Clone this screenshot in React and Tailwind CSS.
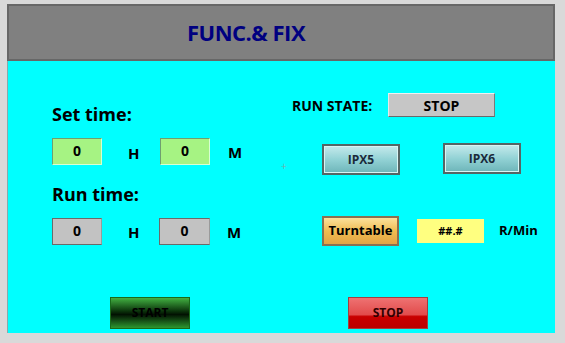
export default function App() {
  const font = { fontFamily: '"Open Sans", "Liberation Sans", sans-serif' };

  return (
    <div className="w-[565px] h-[343px] bg-[#d9d9d9] overflow-hidden pt-[4px] pl-[7px]" style={font}>
      <div className="w-[548px]">
        <div className="h-[57px] bg-[#808080] border-2 border-[#676767] flex items-center justify-center pr-[70px]">
          <h1 className="text-[22px] font-bold text-[#000080] tracking-[-0.5px]">FUNC.&amp; FIX</h1>
        </div>

        <div className="relative h-[272px] bg-[#00ffff] border-l border-[#8aa] flex flex-col">
          <div className="flex flex-1">
            {/* left column */}
            <div className="w-[275px] pl-[44px] pt-[43px] text-black">
              <div className="h-[20px] leading-[20px] text-[18px] font-bold">Set time:</div>
              <div className="flex items-center mt-[14px] h-[27px]">
                <div className="w-[50px] h-[27px] bg-[#a6f383] border border-t-[#6f9f6f] border-l-[#6f9f6f] border-r-[#d8ffd0] border-b-[#d8ffd0] flex items-center justify-center text-[14px] font-bold pb-[2px]">0</div>
                <span className="w-[58px] pl-[26px] pt-[4px] text-[15px] font-bold">H</span>
                <div className="w-[50px] h-[27px] bg-[#a6f383] border border-t-[#6f9f6f] border-l-[#6f9f6f] border-r-[#d8ffd0] border-b-[#d8ffd0] flex items-center justify-center text-[14px] font-bold pb-[2px]">0</div>
                <span className="pl-[18px] pt-[2px] text-[15px] font-bold">M</span>
              </div>
              <div className="h-[20px] leading-[20px] text-[18px] font-bold mt-[19px]">Run time:</div>
              <div className="flex items-center mt-[14px] h-[27px]">
                <div className="w-[50px] h-[27px] bg-[#c2c2c2] border border-[#6a6a6a] border-r-[#9a9a9a] flex items-center justify-center text-[14px] font-bold pb-[2px]">0</div>
                <span className="w-[57px] pl-[26px] pt-[2px] text-[15px] font-bold">H</span>
                <div className="w-[51px] h-[27px] bg-[#c2c2c2] border border-[#6a6a6a] border-r-[#9a9a9a] flex items-center justify-center text-[14px] font-bold pb-[2px]">0</div>
                <span className="pl-[17px] pt-[2px] text-[15px] font-bold">M</span>
              </div>
            </div>

            {/* right column */}
            <div className="flex-1 pt-[32px] text-black">
              <div className="flex items-center pl-[9px] h-[24px]">
                <span className="text-[14px] font-bold w-[96px]">RUN STATE:</span>
                <div className="w-[107px] h-[24px] bg-[#c6c6c6] border border-t-[#f0f0f0] border-l-[#e8e8e8] border-r-[#7a7a7a] border-b-[#6a6a6a] flex items-center justify-center text-[14px] font-bold">STOP</div>
              </div>

              <div className="flex items-center pl-[39px] mt-[27px]">
                <button className="w-[78px] h-[31px] border-2 border-[#556565] bg-gradient-to-b from-[#c4eaec] via-[#92d2d5] to-[#6db5b9] shadow-[inset_0_0_0_1px_#d8f4f4] text-[12px] font-bold text-[#1a2a3a]">IPX5</button>
                <button className="ml-[43px] w-[78px] h-[31px] mt-[-2px] border-2 border-[#556565] bg-gradient-to-b from-[#c4eaec] via-[#92d2d5] to-[#6db5b9] shadow-[inset_0_0_0_1px_#d8f4f4] text-[12px] font-bold text-[#1a2a3a]">IPX6</button>
              </div>

              <div className="flex items-center pl-[39px] mt-[41px]">
                <button className="w-[77px] h-[30px] border-2 border-[#8a7050] bg-gradient-to-b from-[#fbe19a] via-[#f0bc50] to-[#e2a445] text-[13px] font-bold text-black">Turntable</button>
                <div className="ml-[18px] w-[67px] h-[24px] bg-[#ffff80] flex items-center justify-center text-[11px] font-bold">##.#</div>
                <span className="ml-[15px] text-[13px] font-bold">R/Min</span>
              </div>
            </div>
          </div>

          <span className="absolute left-[273px] top-[100px] text-[10px] leading-none text-[#7aa]">+</span>

          <div className="flex pl-[102px] pb-[4px]">
            <button className="w-[80px] h-[32px] border border-[#1a6a1a] bg-[linear-gradient(#42b042,#0a300a_45%,#021202_55%,#2e962e)] text-[12px] font-bold text-black">START</button>
            <button className="ml-[158px] w-[80px] h-[32px] border border-[#a04040] bg-[linear-gradient(#ee7272,#e24c4c_55%,#c80000_62%,#bb0000)] text-[12px] font-bold text-[#300000]">STOP</button>
          </div>
        </div>
      </div>
    </div>
  );
}
